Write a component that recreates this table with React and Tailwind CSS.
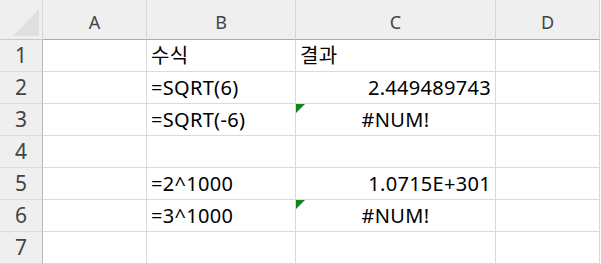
const cols = ['A', 'B', 'C', 'D']

const rows = [
  { n: 1, b: '수식', c: '결과', align: 'left' },
  { n: 2, b: '=SQRT(6)', c: '2.449489743', align: 'right' },
  { n: 3, b: '=SQRT(-6)', c: '#NUM!', align: 'center', flag: true },
  { n: 4 },
  { n: 5, b: '=2^1000', c: '1.0715E+301', align: 'right' },
  { n: 6, b: '=3^1000', c: '#NUM!', align: 'center', flag: true },
  { n: 7 },
]

const alignClass = {
  left: 'justify-start',
  right: 'justify-end',
  center: 'justify-center',
}

export default function App() {
  return (
    <div
      className="w-[601px] h-[264px] overflow-hidden bg-white"
      style={{ fontFamily: '"Noto Sans", "Noto Sans CJK KR", sans-serif' }}
    >
      <div className="grid grid-cols-[43px_104px_149px_200px_104px] grid-rows-[40px_repeat(7,32px)]">
        {/* corner */}
        <div className="relative bg-[#efefef] border-r border-b border-r-[#d6d6d6] border-b-[#c9c9c9]">
          <svg className="absolute left-0 top-0" width="42" height="39" viewBox="0 0 42 39">
            <polygon points="13,36 39,36 39,9" fill="#dfdfdf" />
          </svg>
        </div>
        {cols.map((c) => (
          <div
            key={c}
            className="bg-[#efefef] border-r border-r-[#d6d6d6] border-b border-b-[#ababab] flex justify-center pt-[6px] text-[18px] leading-[33px] text-[#444]"
          >
            {c}
          </div>
        ))}

        {rows.map((r) => (
          <div key={r.n} className="contents">
            <div className="bg-[#efefef] border-r border-r-[#b8b8b8] border-b border-b-[#dcdcdc] flex justify-center text-[21px] leading-[31px] text-[#444]">
              {r.n}
            </div>
            <div className="border-r border-b border-[#dadada]" />
            <div className="border-r border-b border-[#dadada] pl-[4px] text-[20px] leading-[31px] tracking-[0.3px] text-black whitespace-nowrap">
              {r.b}
            </div>
            <div
              className={`relative border-r border-b border-[#dadada] flex px-[4px] text-[20px] leading-[31px] tracking-[0.3px] text-black whitespace-nowrap ${alignClass[r.align] || ''}`}
            >
              {r.flag && (
                <svg className="absolute left-0 top-0" width="9" height="9" viewBox="0 0 9 9">
                  <polygon points="0,0 9,0 0,9" fill="#16801a" />
                </svg>
              )}
              {r.c}
            </div>
            <div className="border-r border-b border-[#dadada]" />
          </div>
        ))}
      </div>
    </div>
  )
}
